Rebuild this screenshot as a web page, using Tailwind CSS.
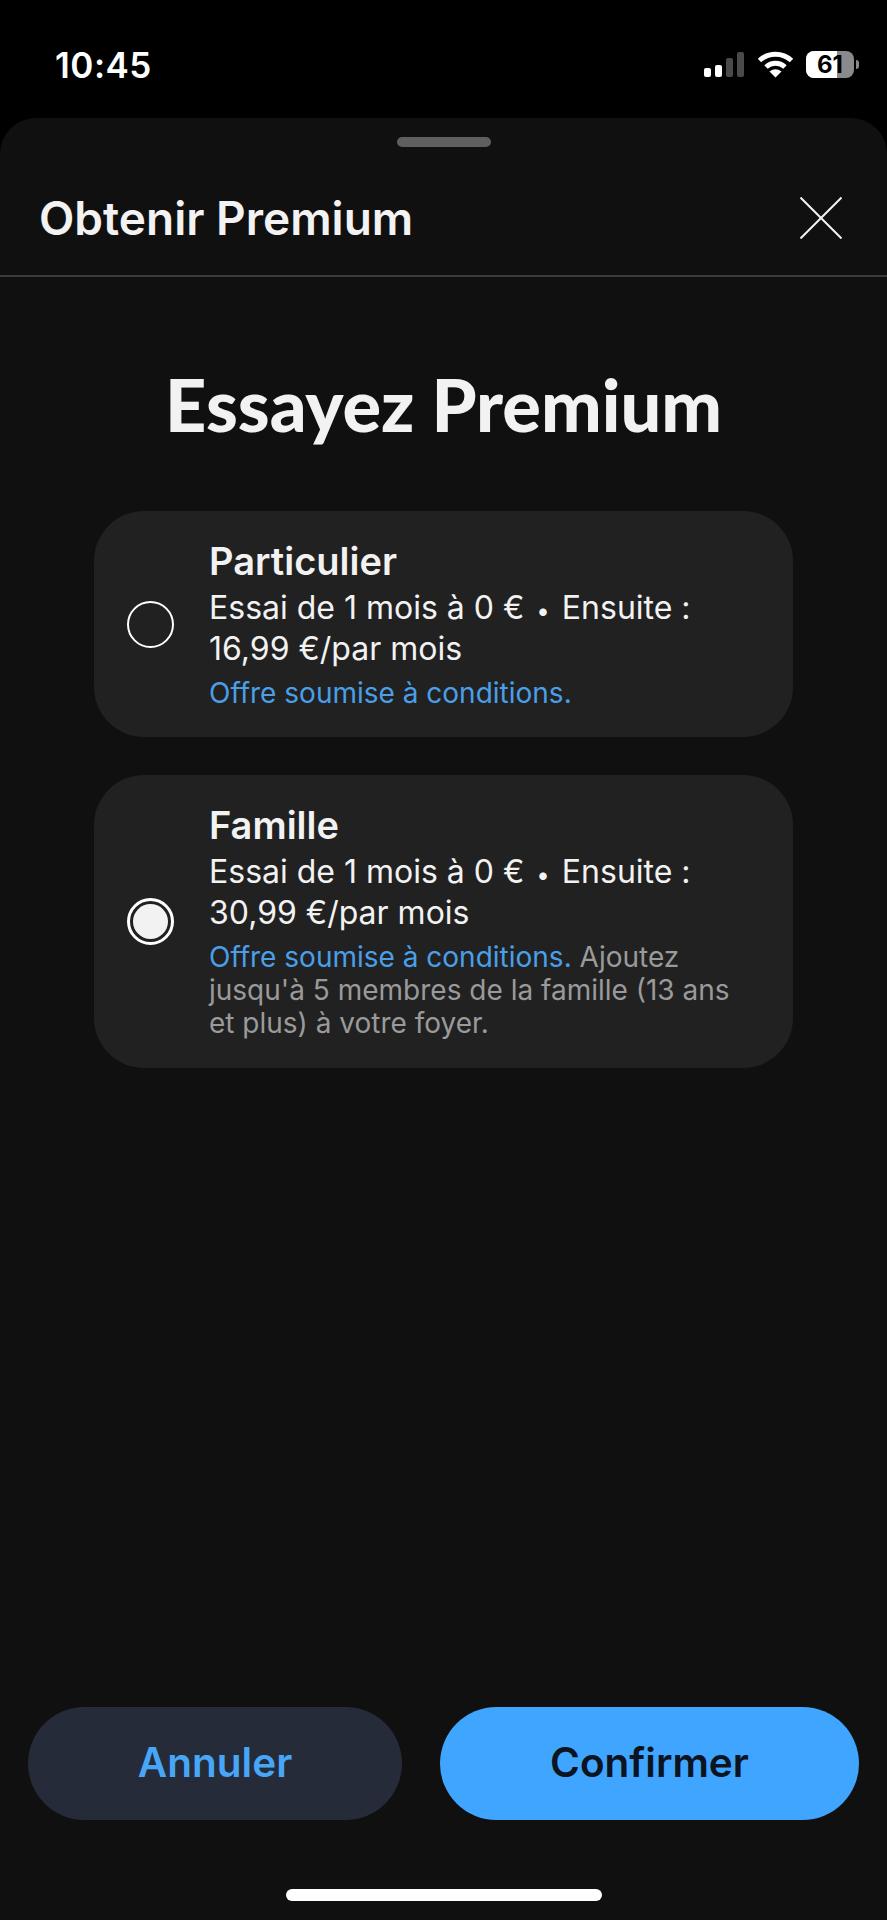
<!DOCTYPE html>
<html lang="fr">
<head>
    <meta charset="UTF-8">
    <meta name="viewport" content="width=device-width, initial-scale=1.0">
    <title>Obtenir Premium</title>
    <script src="https://cdn.jsdelivr.net/npm/@tailwindcss/browser@4"></script>
</head>
<body class="bg-black font-['Inter','Liberation_Sans',sans-serif] text-white">
    <div class="w-[887px] h-[1920px] flex flex-col overflow-hidden">
        <!-- status bar -->
        <div class="h-[118px] shrink-0 flex items-start justify-between pt-[44px] pl-[55px] pr-[28px]">
            <span class="text-[35px] leading-[42px] font-semibold tracking-[0.5px]">10:45</span>
            <div class="flex items-center gap-[12px] pt-[7px]">
                <svg width="41" height="26" viewBox="0 0 41 26">
                    <rect x="0" y="16" width="7" height="9" rx="2" fill="#fff"/>
                    <rect x="11" y="13" width="7" height="12" rx="2" fill="#fff"/>
                    <rect x="22" y="6" width="7" height="19" rx="2" fill="#4a4a4a"/>
                    <rect x="33" y="0" width="7" height="25" rx="2" fill="#4a4a4a"/>
                </svg>
                <svg width="37" height="27" viewBox="0 0 37 27" fill="none" stroke="#fff" stroke-width="5">
                    <path d="M2.5 9.5C11.5 1 25.5 1 34.5 9.5"/>
                    <path d="M9 16C14.5 11 22.5 11 28 16"/>
                    <path d="M18.5 26.5L12.5 20.5Q18.5 16 24.5 20.5Z" fill="#fff" stroke="none"/>
                </svg>
                <div class="flex items-center gap-[2px]">
                    <div class="relative w-[48px] h-[27px] rounded-[8px] bg-[#8a8a8a] overflow-hidden">
                        <div class="w-[31px] h-full bg-white"></div>
                        <span class="absolute inset-0 flex items-center justify-center text-[24px] leading-none font-bold text-black">61</span>
                    </div>
                    <div class="w-[3px] h-[9px] rounded-r-full bg-[#8a8a8a]"></div>
                </div>
            </div>
        </div>

        <!-- sheet -->
        <div class="flex-1 flex flex-col bg-[#101010] rounded-t-[36px]">
            <div class="w-[94px] h-[10px] mx-auto mt-[19px] rounded-full bg-[#5f5f5f]"></div>
            <div class="h-[130px] pt-[14px] flex items-center justify-between pl-[39px] pr-[45px] border-b-2 border-[#3c3c3c]">
                <h1 class="text-[46px] leading-[54px] font-semibold text-[#f2f2f2]">Obtenir Premium</h1>
                <svg width="42" height="42" viewBox="0 0 42 42" stroke="#f2f2f2" stroke-width="2" fill="none">
                    <path d="M0.5 0.5L41.5 41.5M41.5 0.5L0.5 41.5"/>
                </svg>
            </div>

            <h2 class="mt-[87px] text-center text-[72px] leading-[80px] font-['Lato',sans-serif] font-black text-[#f2f2f2]">Essayez Premium</h2>

            <div class="mt-[67px] mx-[94px] flex flex-col gap-[38px]">
                <div class="h-[226px] flex items-center gap-[35px] pl-[33px] pr-[39px] rounded-[50px] bg-[#212121]">
                    <div class="w-[47px] h-[47px] shrink-0 rounded-full border-2 border-white"></div>
                    <div>
                        <p class="text-[38px] leading-[44px] font-semibold text-[#f2f2f2]">Particulier</p>
                        <p class="mt-[6px] text-[32px] leading-[38px] text-[#f2f2f2]">Essai de 1 mois à 0 € <span class="text-[24px] mx-[3px]">•</span> Ensuite :<br>16,99 €/par mois</p>
                        <p class="mt-[9px] text-[28px] leading-[33px] text-[#4a9fe8]">Offre soumise à conditions.</p>
                    </div>
                </div>
                <div class="h-[293px] flex items-center gap-[35px] pl-[33px] pr-[39px] rounded-[50px] bg-[#212121]">
                    <div class="w-[47px] h-[47px] shrink-0 flex items-center justify-center rounded-full border-[3px] border-white">
                        <div class="w-[35px] h-[35px] rounded-full bg-[#f2f2f2]"></div>
                    </div>
                    <div>
                        <p class="text-[38px] leading-[44px] font-semibold text-[#f2f2f2]">Famille</p>
                        <p class="mt-[6px] text-[32px] leading-[38px] text-[#f2f2f2]">Essai de 1 mois à 0 € <span class="text-[24px] mx-[3px]">•</span> Ensuite :<br>30,99 €/par mois</p>
                        <p class="mt-[9px] text-[28px] leading-[33px] text-[#9a9a9a]"><span class="text-[#4a9fe8]">Offre soumise à conditions.</span> Ajoutez<br>jusqu'à 5 membres de la famille (13 ans<br>et plus) à votre foyer.</p>
                    </div>
                </div>
            </div>

            <div class="mt-auto flex gap-[38px] pl-[28px] pr-[28px]">
                <button class="w-[374px] h-[113px] rounded-full bg-[#262b3a] text-[40.5px] font-semibold text-[#48a6f7]">Annuler</button>
                <button class="w-[419px] h-[113px] rounded-full bg-[#40a5ff] text-[40.5px] font-semibold text-[#0b1420]">Confirmer</button>
            </div>
            <div class="w-[316px] h-[12px] mx-auto mt-[69px] mb-[19px] rounded-full bg-white"></div>
        </div>
    </div>
</body>
</html>
